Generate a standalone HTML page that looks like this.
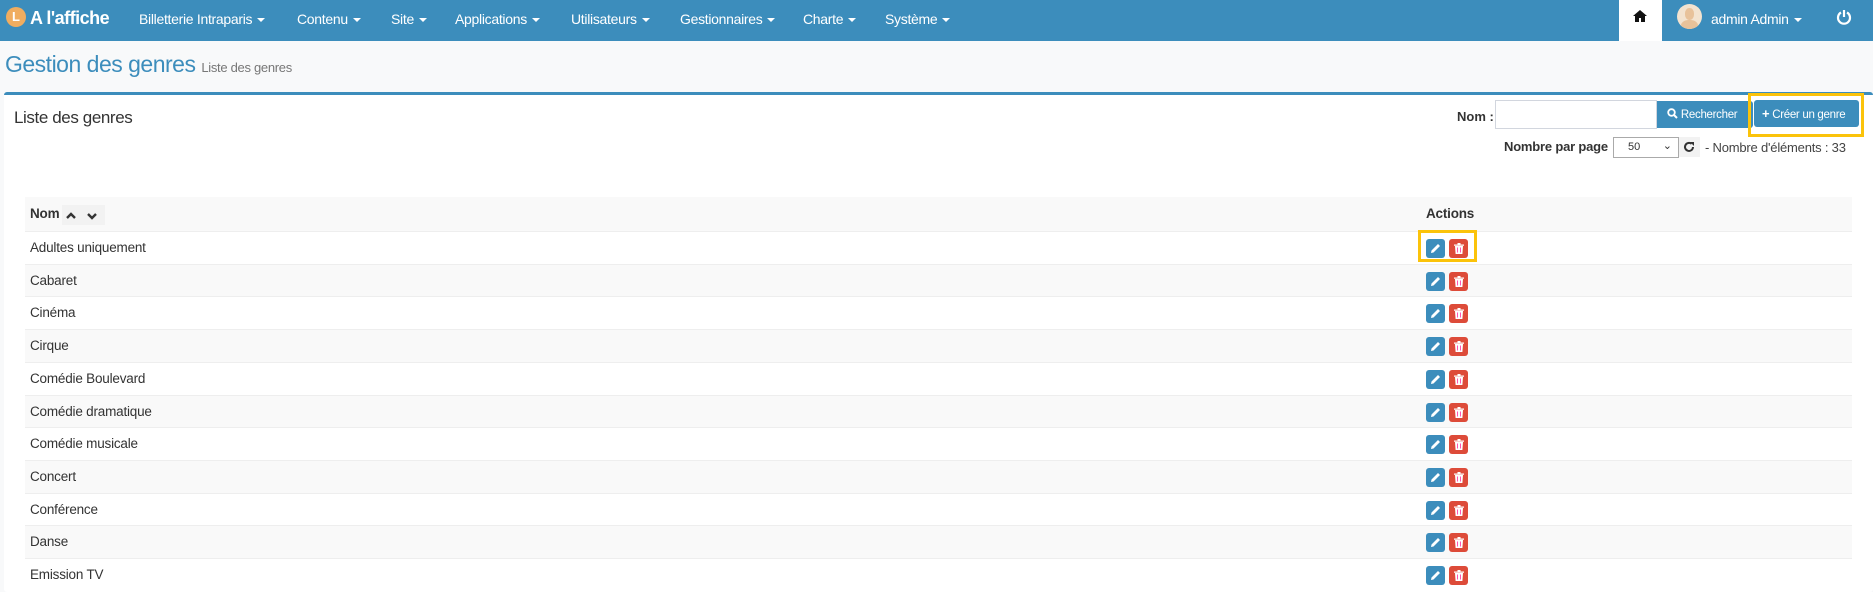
<!DOCTYPE html>
<html><head><meta charset="utf-8"><style>
*{box-sizing:border-box;margin:0;padding:0}
body{width:1873px;height:583px;overflow:hidden;background:#f8f9fa;font-family:"Liberation Sans",sans-serif;color:#333;position:relative}
.nav{position:absolute;left:0;top:0;width:1873px;height:41px;background:#3c8dbc}
.nav .i{position:absolute;top:11px;color:#fff;font-size:14px;letter-spacing:-0.3px;white-space:nowrap}
.car{display:inline-block;width:0;height:0;border-left:4px solid transparent;border-right:4px solid transparent;border-top:4px solid #fff;vertical-align:middle;margin-left:5px}
.a{position:absolute;white-space:nowrap}
.panel{position:absolute;left:4px;top:92px;width:1869px;height:500px;background:#fff;border-top:3px solid #3c8dbc;border-radius:3px}
.row{position:absolute;left:25px;width:1827px;height:33px;border-top:1px solid #eee;font-size:13.5px;letter-spacing:-0.2px}
.row span{position:absolute;left:5px;top:8px}
.sh{background:#f9f9f9}
.btn{position:absolute;width:19px;height:19px;border-radius:3px}
.e{background:#3c8dbc;left:1401px;top:7px}
.d{background:#dd4b39;left:1424px;top:7px}
</style></head><body>
<div class="nav">
  <div style="position:absolute;left:6px;top:7px;width:20px;height:20px;border-radius:50%;background:#f0ad60;color:#fff;font-size:13px;font-weight:bold;text-align:center;line-height:20px">L</div>
  <div class="i" style="left:30px;top:8px;font-size:18px;font-weight:bold;letter-spacing:-0.5px">A l'affiche</div>
  <div class="i" style="left:139px">Billetterie Intraparis<span class="car"></span></div>
  <div class="i" style="left:297px">Contenu<span class="car"></span></div>
  <div class="i" style="left:391px">Site<span class="car"></span></div>
  <div class="i" style="left:455px">Applications<span class="car"></span></div>
  <div class="i" style="left:571px">Utilisateurs<span class="car"></span></div>
  <div class="i" style="left:680px">Gestionnaires<span class="car"></span></div>
  <div class="i" style="left:803px">Charte<span class="car"></span></div>
  <div class="i" style="left:885px">Système<span class="car"></span></div>
  <div style="position:absolute;left:1619px;top:0;width:43px;height:41px;background:#fff">
    <svg width="14" height="12" viewBox="0 0 14 12" style="position:absolute;left:14px;top:10px"><path d="M7 0L0 6h2v6h4V8h2v4h4V6h2z" fill="#111"/></svg>
  </div>
  <div style="position:absolute;left:1677px;top:4px;width:25px;height:25px;border-radius:50%;background:#f3e3cf;overflow:hidden">
    <div style="position:absolute;left:8px;top:4px;width:9px;height:12px;border-radius:45%;background:#e8c29a"></div>
    <div style="position:absolute;left:4px;top:16px;width:17px;height:12px;border-radius:45% 45% 0 0;background:#e8c29a"></div>
  </div>
  <div class="i" style="left:1711px">admin Admin<span class="car"></span></div>
  <svg width="16" height="16" viewBox="0 0 16 16" style="position:absolute;left:1836px;top:9px"><path d="M5 3.5A6 6 0 1 0 11 3.5" fill="none" stroke="#fff" stroke-width="2.2"/><path d="M8 1v7" stroke="#fff" stroke-width="2.2"/></svg>
</div>
<div class="a" style="left:5px;top:51px;font-size:23px;color:#3c8dbc;letter-spacing:-0.5px">Gestion des genres <span style="font-size:13px;color:#777;letter-spacing:-0.3px">Liste des genres</span></div>
<div class="panel">
  <div class="a" style="left:10px;top:13px;font-size:17px;letter-spacing:-0.4px">Liste des genres</div>
  <div class="a" style="left:1453px;top:14px;font-size:13px;font-weight:bold">Nom :</div>
  <div class="a" style="left:1491px;top:5px;width:162px;height:29px;border:1px solid #d2d6de;background:#fff"></div>
  <div class="a" style="left:1653px;top:6px;width:96px;height:27px;background:#3c8dbc;border-radius:0 3px 3px 0;color:#fff;font-size:11.5px;padding:7px 0 0 10px;letter-spacing:-0.3px">
    <svg width="11" height="11" viewBox="0 0 11 11" style="vertical-align:-1px"><circle cx="4.5" cy="4.5" r="3.3" fill="none" stroke="#fff" stroke-width="1.8"/><path d="M7 7l3 3" stroke="#fff" stroke-width="2"/></svg> Rechercher</div>
  <div class="a" style="left:1744px;top:-2px;width:116px;height:44px;border:3px solid #fbc30a"></div>
  <div class="a" style="left:1750px;top:5px;width:105px;height:27px;background:#3c8dbc;border-radius:3px;color:#fff;font-size:11.5px;padding:6px 0 0 8px;letter-spacing:-0.3px"><b style="font-size:13px">+</b> Créer un genre</div>
  <div class="a" style="left:1500px;top:44px;font-size:13px;font-weight:bold;letter-spacing:-0.2px">Nombre par page</div>
  <div class="a" style="left:1609px;top:42px;width:66px;height:21px;border:1px solid #aaa;background:#fff;font-size:11px;padding:3px 0 0 14px">50<span style="position:absolute;right:6px;top:1px;font-size:11px">&#8964;</span></div>
  <div class="a" style="left:1675px;top:42px;width:21px;height:20px;background:#f2f2f2">
    <svg width="12" height="12" viewBox="0 0 12 12" style="position:absolute;left:4px;top:4px"><path d="M10 6A4 4 0 1 1 8.6 2.9" fill="none" stroke="#333" stroke-width="2"/><path d="M7 1h4v4z" fill="#333"/></svg></div>
  <div class="a" style="left:1701px;top:45px;font-size:13px;color:#444;letter-spacing:-0.2px">- Nombre d'éléments : 33</div>
</div>
<div class="row sh" style="top:197px;height:34px;border-top:none;font-weight:bold">
  <span style="top:9px">Nom</span>
  <div style="position:absolute;left:37px;top:8px;width:43px;height:20px;background:#f2f2f2">
    <svg width="40" height="12" viewBox="0 0 40 12" style="position:absolute;left:2px;top:5px"><path d="M3 8l4-4 4 4" fill="none" stroke="#333" stroke-width="2.4"/><path d="M24 4l4 4 4-4" fill="none" stroke="#333" stroke-width="2.4"/></svg>
  </div>
  <span style="left:1401px;top:9px">Actions</span>
</div>
<div id="rows"></div>
<div class="a" style="left:1418px;top:230px;width:59px;height:32px;border:3px solid #fbc30a;z-index:5"></div>
<script>
var n=["Adultes uniquement","Cabaret","Cinéma","Cirque","Comédie Boulevard","Comédie dramatique","Comédie musicale","Concert","Conférence","Danse","Emission TV"];
var h="";
var pen='<svg width="11" height="11" viewBox="0 0 11 11" style="position:absolute;left:4px;top:4px"><path d="M1 10l0.5-2.5L8 1l2 2-6.5 6.5z" fill="#fff"/></svg>';
var bin='<svg width="10" height="11" viewBox="0 0 10 11" style="position:absolute;left:5px;top:4px"><path d="M0 1.5h10v1.3H0zM3.5 0h3v1.5h-3zM1 3h8l-0.6 8H1.6z" fill="#fff"/><path d="M3.5 4.5v5M6.5 4.5v5" stroke="#f4a" stroke-width="0.9"/></svg>';
for(var i=0;i<n.length;i++){h+='<div class="row'+(i%2?' sh':'')+'" style="top:'+(231+i*32.7)+'px"><span>'+n[i]+'</span><div class="btn e">'+pen+'</div><div class="btn d">'+bin+'</div></div>';}
document.getElementById("rows").innerHTML=h;
</script>
</body></html>
